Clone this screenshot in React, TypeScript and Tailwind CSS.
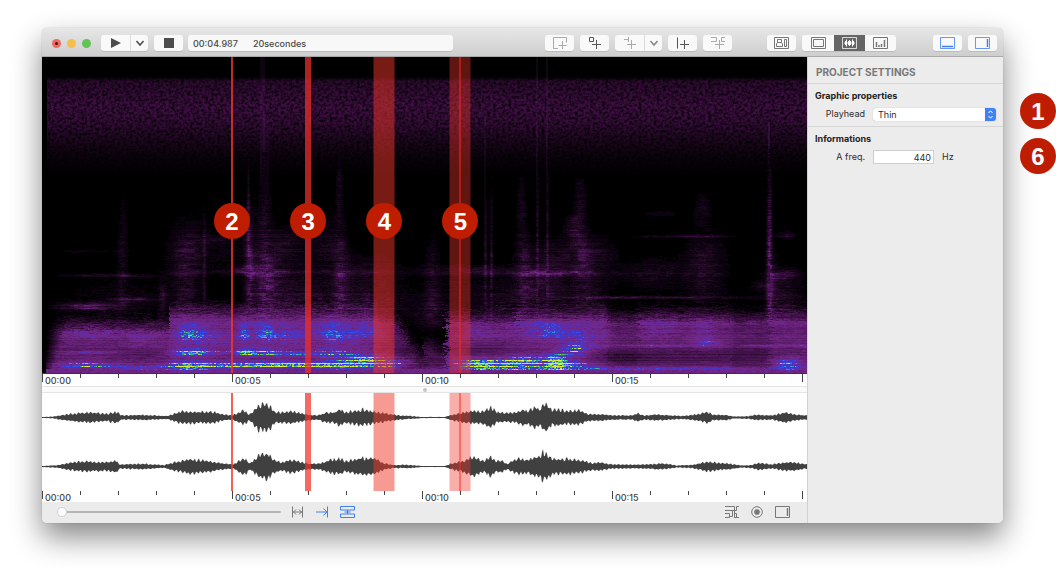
import { useMemo, useState } from "react";
import type { ReactNode } from "react";
import clsx from "clsx";

const W = 765;

/* ---------- Deterministic noise ---------- */

function createRandom(seed: number) {
  let s = seed;
  return () => {
    s = (s + 0x6d2b79f5) | 0;
    let t = Math.imul(s ^ (s >>> 15), 1 | s);
    t = (t + Math.imul(t ^ (t >>> 7), 61 | t)) ^ t;
    return ((t ^ (t >>> 14)) >>> 0) / 4294967296;
  };
}

/* ---------- Spectrogram ---------- */

const PALETTE = [
  "#0d020f", "#180619", "#240928", "#310d37", "#3f1147", "#4d1658", "#5a1b68",
  "#672178", "#6f2686", "#6a2b9a", "#5530b4", "#3f38d2", "#3150ea", "#2f8ccb",
  "#4fbf8a", "#98d944", "#dced3a",
];

// [from, to, top of band, level]
const BANDS: number[][] = [
  [0, 127, 266, 0.41], [127, 190, 251, 0.44], [190, 335, 252, 0.44], [335, 350, 256, 0.4],
  [350, 358, 262, 0.34], [358, 366, 272, 0.3], [366, 374, 286, 0.3], [374, 382, 294, 0.29],
  [382, 394, 286, 0.31], [394, 404, 290, 0.28], [404, 474, 258, 0.42], [474, 566, 253, 0.44],
  [566, 597, 258, 0.37], [597, 640, 256, 0.42], [640, 690, 255, 0.42], [690, 728, 258, 0.37], [728, 780, 255, 0.43],
];

// [x, y, radius x, radius y, amount]
const SPOTS: number[][] = [
  [48, 275, 30, 6, 0.16], [100, 281, 14, 8, 0.13], [48, 295, 28, 1.4, 0.24], [45, 308, 32, 3.5, 0.36], [100, 311, 24, 2, 0.26],
  [148, 275, 12, 8, 0.2], [165, 280, 28, 10, 0.11], [148, 295, 18, 3, 0.38], [180, 295, 30, 1.6, 0.22], [145, 309, 22, 5, 0.36],
  [202, 276, 5, 10, 0.22], [224, 275, 12, 9, 0.22], [250, 277, 14, 9, 0.14], [203, 295, 8, 3, 0.34], [226, 295, 16, 3, 0.36],
  [290, 275, 17, 10, 0.2], [325, 274, 15, 8, 0.17], [285, 296, 22, 4, 0.28], [255, 296, 12, 2, 0.24], [205, 308, 60, 3.4, 0.4],
  [255, 307, 35, 2.5, 0.3], [295, 308, 22, 4, 0.34], [322, 303, 20, 6, 0.42], [345, 307, 14, 6, 0.34], [362, 305, 12, 4, 0.18],
  [225, 285, 30, 18, 0.07], [300, 285, 30, 18, 0.07], [147, 285, 25, 18, 0.07],
  [435, 275, 20, 10, 0.1], [500, 273, 28, 9, 0.17], [508, 272, 10, 6, 0.07], [540, 280, 28, 12, 0.14],
  [430, 306, 20, 5, 0.35], [455, 307, 30, 5, 0.32], [485, 304, 25, 6, 0.36], [514, 303, 10, 7, 0.46], [534, 293, 12, 7, 0.3],
  [530, 307, 22, 3, 0.34], [575, 311, 180, 1.4, 0.33], [615, 288, 42, 1.2, 0.2], [666, 286, 13, 4, 0.2], [718, 288, 15, 1.2, 0.2],
  [660, 275, 14, 12, 0.1], [615, 270, 18, 14, 0.09], [745, 306, 14, 6, 0.34], [755, 288, 14, 1.3, 0.2],
  [650, 299, 95, 7, -0.14], [440, 291, 30, 5, -0.1], [580, 300, 30, 5, -0.1], [100, 297, 30, 5, -0.06],
];

// Faint traces above the main band: [x, y, radius x, radius y, amount]
const TRACES: number[][] = [
  [45, 249, 26, 3.5, 0.3], [92, 242, 16, 2, 0.18], [80, 245, 50, 20, 0.05], [120, 240, 4, 14, 0.14], [80, 200, 5, 55, 0.1], [55, 218, 34, 1.5, 0.11], [95, 219, 18, 1.5, 0.11], [45, 194, 30, 1.5, 0.06],
  [145, 190, 18, 26, 0.1], [143, 225, 12, 34, 0.13], [168, 182, 22, 3, 0.1], [162, 220, 1.5, 60, 0.12],
  [206, 155, 1.5, 50, 0.14], [207, 215, 4, 50, 0.21], [202, 213, 12, 4, 0.16], [222, 190, 7, 90, 0.12], [224, 226, 14, 30, 0.18],
  [200, 190, 40, 30, 0.05], [246, 230, 24, 28, 0.1], [235, 214, 90, 1.6, 0.12], [245, 185, 14, 14, 0.1], [297, 130, 4, 26, 0.11], [298, 220, 6, 40, 0.19],
  [285, 185, 16, 22, 0.1], [320, 216, 34, 16, 0.11], [330, 245, 30, 14, 0.15], [275, 245, 28, 17, 0.1],
  [390, 230, 7, 46, 0.11], [388, 270, 16, 22, 0.16], [425, 213, 40, 4, 0.14], [443, 195, 1.4, 62, 0.15], [449, 195, 1.4, 62, 0.15],
  [430, 235, 30, 24, 0.05], [461, 245, 18, 16, 0.07], [479, 150, 5, 34, 0.1], [481, 214, 7, 34, 0.13], [495, 177, 1.4, 75, 0.14], [505, 177, 1.4, 75, 0.14],
  [512, 215, 42, 2.6, 0.2], [499, 230, 24, 20, 0.16], [515, 200, 28, 18, 0.11], [538, 140, 6, 24, 0.11], [533, 172, 9, 14, 0.18],
  [541, 205, 8, 22, 0.15], [557, 200, 16, 20, 0.1], [545, 240, 16, 16, 0.13], [570, 240, 60, 1.2, 0.16], [640, 240, 110, 1.2, 0.13],
  [618, 179, 24, 1.5, 0.11], [660, 179, 24, 1.5, 0.12], [618, 156, 18, 3, 0.08], [612, 216, 28, 14, 0.1], [660, 150, 8, 16, 0.1],
  [662, 210, 18, 30, 0.14], [727, 200, 2.5, 75, 0.3], [730, 235, 5, 34, 0.1], [722, 228, 12, 5, 0.1], [740, 218, 14, 5, 0.15], [744, 178, 9, 4, 0.13],
  [742, 240, 16, 30, 0.11],
];

function addSpots(list: number[][], x: number, y: number) {
  let sum = 0;
  for (const [cx, cy, rx, ry, a] of list) {
    const dx = (x - cx) / rx;
    const dy = (y - cy) / ry;
    const d = dx * dx + dy * dy;
    if (d < 5) sum += a * Math.exp(-d * 0.9);
  }
  return sum;
}

function buildSpectrogram() {
  const random = createRandom(17);
  const paths: string[][] = PALETTE.map(() => []);
  const clumps = Array.from({ length: 60 * 170 }, () => random());
  for (let y = 90; y < 316; y++) {
    const row = random();
    let runStart = 4;
    let runLevel = -1;
    const flush = (x: number) => {
      if (runLevel >= 0) paths[runLevel].push(`M${runStart} ${y}.5H${x}`);
    };
    let streak = 0;
    let grain = 0;
    for (let x = 4; x < W; x++) {
      if (x % 2 === 0 || random() > 0.7) {
        streak = random();
        grain = grain * 0.55 + streak * 0.45;
      }
      const clump = clumps[Math.floor(y / 4) * 100 + Math.floor(x / 8)];
      const spread = x > 115 && x < 140 ? 2 : 14;
      const at = x + (grain - 0.5) * spread;
      const band = BANDS.find((b) => at >= b[0] && at < b[1]) ?? BANDS[0];
      const ramp = Math.max(0, Math.min(1, (y - band[2] + 6 + grain * 8) / 20));
      const attack = Math.min(1, (x - 2 + (y - 290) * 0.25) / 16);
      let v = ramp * (band[3] + (row - 0.5) * 0.07 + (clump - 0.5) * 0.03) * Math.max(0.15, attack);
      if (ramp > 0) {
        v += addSpots(SPOTS, x, y) * (y > 285 ? (y % 3 === 0 ? 1.3 : 0.72) : 0.9 + row * 0.35) * (0.6 + streak * 0.6);
        v += (grain - 0.5) * 0.12;
        if (y > 311) v = Math.max(v, 0.44 + streak * 0.1);
      }
      if (y < 276) {
        const fade = y > 255 ? (276 - y) / 21 : 1;
        const trace = Math.min(0.32, addSpots(TRACES, x, y));
        v += trace * fade * (0.3 + grain * 0.9 + clump * 0.5) * (0.75 + row * 0.5) * (1 - ramp * 0.7);
        if (ramp < 0.1) v += 0.05 * grain * Math.max(0, (y - 130) / 120);
      }
      const level = Math.min(PALETTE.length - 1, Math.floor(v * 19) - 1);
      if (level !== runLevel) {
        flush(x);
        runStart = x;
        runLevel = level;
      }
    }
    flush(W);
  }
  return paths.map((p) => p.join(""));
}

function Spectrogram() {
  const paths = useMemo(buildSpectrogram, []);
  return (
    <svg
      className="block h-full w-full bg-black"
      viewBox="0 0 765 316"
      preserveAspectRatio="none"
      role="img"
      aria-label="Spectrogram"
    >
      <defs>
        <linearGradient id="band-fade" x1="0" y1="0" x2="0" y2="1">
          <stop offset="0" stopColor="#fff" stopOpacity="0" />
          <stop offset="0.04" stopColor="#fff" stopOpacity="0.6" />
          <stop offset="0.3" stopColor="#fff" stopOpacity="0.84" />
          <stop offset="0.45" stopColor="#fff" stopOpacity="0.72" />
          <stop offset="0.62" stopColor="#fff" stopOpacity="0.42" />
          <stop offset="0.8" stopColor="#fff" stopOpacity="0.16" />
          <stop offset="1" stopColor="#fff" stopOpacity="0" />
        </linearGradient>
        <mask id="band-mask">
          <rect x="5" y="20" width="760" height="100" fill="url(#band-fade)" />
        </mask>
        <filter id="grain" x="0" y="0" width="1" height="1" colorInterpolationFilters="sRGB">
          <feTurbulence type="fractalNoise" baseFrequency="0.33 0.38" numOctaves="3" seed="4" />
          <feColorMatrix values="0 0 0 0 0.3  0 0 0 0 0.07  0 0 0 0 0.32  1.8 0 0 0 -0.2" />
        </filter>
      </defs>
      <g mask="url(#band-mask)">
        <rect x="0" y="18" width="765" height="104" filter="url(#grain)" />
      </g>
      <g fill="#7a2a8c">
        <rect x="218" y="0" width="5" height="130" opacity="0.12" />
        <rect x="221" y="60" width="6" height="80" opacity="0.1" />
        <rect x="494" y="0" width="2" height="130" opacity="0.14" />
        <rect x="504" y="0" width="2" height="130" opacity="0.14" />
        <rect x="442" y="60" width="2" height="90" opacity="0.1" />
        <rect x="726" y="65" width="2" height="80" opacity="0.25" />
      </g>
      <g fill="none" strokeWidth="1">
        {paths.map((d, i) => (
          <path key={PALETTE[i]} d={d} stroke={PALETTE[i]} />
        ))}
      </g>
    </svg>
  );
}

/* ---------- Waveforms ---------- */

const LEFT_ENVELOPE: number[][] = [
  [0, 0.5], [10, 0.8], [25, 3], [35, 4], [47, 5], [65, 3.5], [74, 5.5], [80, 2], [100, 2.5], [125, 1.5], [132, 3.5],
  [140, 6], [155, 5.5], [172, 5.5], [180, 3], [190, 2], [195, 4], [202, 7], [207, 3], [212, 7], [217, 12], [222, 13.5],
  [228, 11], [233, 5], [250, 5.5], [258, 4.5], [265, 3], [275, 2], [285, 5], [292, 5], [298, 8], [304, 5], [320, 8],
  [330, 6], [340, 4.5], [350, 3], [357, 2], [366, 1.6], [380, 0.6], [403, 0.5], [407, 2], [415, 3.5], [425, 6],
  [440, 6], [449, 10], [455, 5], [465, 4.5], [475, 5], [481, 8], [485, 6], [490, 9], [494, 10], [497, 7], [502, 13],
  [506, 12], [510, 7], [517, 8], [526, 6], [537, 7], [545, 3.5], [560, 3], [575, 2], [590, 2], [596, 4], [602, 2],
  [615, 2.8], [640, 1.5], [656, 3], [666, 5.5], [671, 2.5], [684, 2.5], [692, 1], [705, 1.2], [715, 2.5], [730, 2], [743, 5], [755, 2.6], [765, 2],
];

const RIGHT_ENVELOPE: number[][] = [
  [0, 0.5], [15, 1.2], [28, 3.5], [45, 5], [60, 4], [70, 4.5], [75, 6], [77, 2], [100, 2.6], [122, 1.3], [132, 4],
  [148, 7], [165, 5.5], [180, 3], [192, 2], [202, 8.5], [208, 3], [214, 8], [219, 12], [226, 12], [232, 6], [240, 4],
  [248, 6.5], [258, 4.5], [268, 2.5], [278, 3], [285, 5.5], [298, 7.5], [304, 5], [320, 8.5], [333, 7.5], [342, 3],
  [352, 1.5], [366, 1.6], [380, 0.6], [403, 0.5], [408, 2.5], [420, 5], [431, 9.5], [442, 5], [449, 10], [453, 5.5], [460, 5.5],
  [465, 2.5], [475, 7.5], [485, 6.5], [493, 9], [498, 10], [501, 14.5], [506, 11], [512, 7], [525, 7.5], [540, 5.5],
  [550, 3.5], [558, 4], [570, 2], [590, 1.8], [605, 2], [620, 3], [635, 1], [650, 1.5], [665, 4.5], [685, 3],
  [700, 1], [710, 1.5], [716, 3.5], [730, 2], [742, 4], [752, 4], [765, 2],
];

function waveformPath(envelope: number[][], center: number, seed: number) {
  const random = createRandom(seed);
  const upper: string[] = [];
  const lower: string[] = [];
  for (let x = 0; x <= W; x++) {
    const next = Math.max(1, envelope.findIndex((p) => p[0] >= x));
    const [x0, a0] = envelope[next - 1];
    const [x1, a1] = envelope[next];
    const amp = a0 + ((a1 - a0) * (x - x0)) / (x1 - x0);
    const pulse = x % 4 < 2 ? 1.12 : 0.84;
    upper.push(`${x} ${(center - Math.max(0.6, amp * pulse * (0.85 + random() * 0.3))).toFixed(1)}`);
    lower.unshift(`${x} ${(center + Math.max(0.6, amp * pulse * (0.85 + random() * 0.3))).toFixed(1)}`);
  }
  return `M${upper.join("L")}L${lower.join("L")}Z`;
}

const LEFT_WAVE = waveformPath(LEFT_ENVELOPE, 24.5, 5);
const RIGHT_WAVE = waveformPath(RIGHT_ENVELOPE, 73.5, 9);

function Waveforms() {
  return (
    <svg className="block h-full w-full" viewBox="0 0 765 98" preserveAspectRatio="none" role="img" aria-label="Waveform">
      <path d={LEFT_WAVE} fill="#404040" />
      <path d={RIGHT_WAVE} fill="#404040" />
    </svg>
  );
}

/* ---------- Playheads and ruler ---------- */

const PLAYHEADS = [
  { id: 2, left: "left-[24.84%]", bar: "w-[2px] bg-[#f0382b]/80", core: false },
  { id: 3, left: "left-[34.8%]", bar: "w-[6px] bg-[#f0302a]/72", core: false },
  { id: 4, left: "left-[44.75%]", bar: "w-[21px] bg-[#f0352a]/50", core: false },
  { id: 5, left: "left-[54.7%]", bar: "w-[21px] bg-[#f0352a]/40", core: true },
];

function Badge({ children }: { children: ReactNode }) {
  return (
    <span className="flex size-9 shrink-0 items-center justify-center rounded-full bg-[#bf1d02] pt-px font-['Liberation_Sans',sans-serif] text-2xl leading-none font-bold text-white">
      {children}
    </span>
  );
}

function Playheads({ labelled = false }: { labelled?: boolean }) {
  return (
    <>
      {PLAYHEADS.map((p) => (
        <div key={p.id} className={clsx("absolute inset-y-0 flex w-0 items-center justify-center", p.left)}>
          <div className={clsx("absolute inset-y-0 left-0 flex -translate-x-1/2 justify-center", p.bar)}>
            {p.core && <div className="h-full w-px bg-[#ff2a1c]" />}
          </div>
          {labelled && (
            <div className="relative pt-3">
              <Badge>{p.id}</Badge>
            </div>
          )}
        </div>
      ))}
    </>
  );
}

function Ruler({ className }: { className: string }) {
  return (
    <div className={clsx("grid grid-cols-[190fr_190fr_190fr_190fr_5fr] overflow-hidden", className)}>
      {["00:00", "00:05", "00:10", "00:15", ""].map((label, i) => (
        <div key={i} className="relative min-w-0 pt-[2px] pl-[3px] text-[9px] leading-[10px] font-medium text-[#444]">
          <div className="absolute inset-0 grid grid-cols-5">
            <i className="h-2 border-l border-[#444]" />
            {label && [1, 2, 3, 4].map((n) => <i key={n} className="h-1 border-l border-[#444]" />)}
          </div>
          {label}
        </div>
      ))}
    </div>
  );
}

/* ---------- Toolbar ---------- */

function Icon({ children, className, w = 16 }: { children: ReactNode; className?: string; w?: number }) {
  return (
    <svg
      className={clsx("h-[14px] shrink-0", className)}
      width={w}
      height="14"
      viewBox={`0 0 ${w} 14`}
      fill="none"
      stroke="currentColor"
      strokeWidth="1"
      aria-hidden="true"
    >
      {children}
    </svg>
  );
}

function ToolButton({ label, className, children }: { label: string; className?: string; children: ReactNode }) {
  return (
    <button
      type="button"
      aria-label={label}
      className={clsx("flex h-4 shrink-0 items-center justify-center", className ?? "w-[29px] rounded-[3px] bg-[#f9f9f9] text-[#636363] shadow-[0_1px_0_#bcbcbc]")}
    >
      {children}
    </button>
  );
}

const GROUP = "flex shrink-0 overflow-hidden rounded-[3px] bg-[#f9f9f9] shadow-[0_1px_0_#bcbcbc]";

function Toolbar() {
  return (
    <header className="flex h-[29px] items-center rounded-t-[5px] border-b border-[#a9a9a9] bg-linear-to-b from-[#e7e7e7] to-[#cecece] pt-[2px] pr-[6px] pl-[10px]">
      <div className="flex w-[49px] shrink-0 gap-[6px]">
        <button type="button" aria-label="Close" className="flex size-[9px] items-center justify-center rounded-full bg-[#ee6a5f]">
          <span className="size-[3px] rounded-full bg-[#5c0a06]" />
        </button>
        <button type="button" aria-label="Minimize" className="size-[9px] rounded-full bg-[#f5be4f]" />
        <button type="button" aria-label="Zoom" className="size-[9px] rounded-full bg-[#61c454]" />
      </div>
      <div className="flex shrink-0 gap-[6px]">
        <div className={GROUP}>
          <ToolButton label="Play" className="w-[30px] border-r border-[#dcdcdc] text-[#4c4c4c]">
            <Icon w={12}>
              <path d="M1 2v10l10-5z" fill="currentColor" stroke="none" />
            </Icon>
          </ToolButton>
          <ToolButton label="Playback options" className="w-[17px] text-[#4c4c4c]">
            <Icon w={10}>
              <path d="M1.5 5l3.5 4 3.5-4" strokeWidth="1.5" />
            </Icon>
          </ToolButton>
        </div>
        <ToolButton label="Stop">
          <span className="size-[10px] bg-[#4c4c4c]" />
        </ToolButton>
      </div>
      <div className="ml-[5px] flex h-4 min-w-0 flex-[263] items-center gap-[15px] overflow-hidden rounded-[3px] bg-[#f8f8f8] px-[5px] pt-px text-[9px] font-medium whitespace-nowrap text-[#484848] shadow-[0_1px_0_#bcbcbc]">
        <span>00:04.987</span>
        <span>20secondes</span>
      </div>
      <div className="min-w-2 flex-[95]" />
      <div className="flex shrink-0 gap-[6px]">
        <ToolButton label="Add region">
          <Icon className="text-[#aaa]">
            <path d="M6 12.5H1.5v-11h13v5M10.5 5v8M6.5 9.5h8" />
          </Icon>
        </ToolButton>
        <ToolButton label="Add object">
          <Icon className="text-[#555]">
            <path d="M2.5 1.5h4v4h-4zM9.5 4v9M5 8.5h9" />
          </Icon>
        </ToolButton>
        <div className={GROUP}>
          <ToolButton label="Add point" className="w-[30px] border-r border-[#dcdcdc] text-[#aaa]">
            <Icon>
              <path d="M2 3.5h4M6.5 1v5M9.5 4v9M5 8.5h9" />
            </Icon>
          </ToolButton>
          <ToolButton label="Point options" className="w-[17px] text-[#888]">
            <Icon w={10}>
              <path d="M1.5 5l3.5 4 3.5-4" strokeWidth="1.5" />
            </Icon>
          </ToolButton>
        </div>
        <ToolButton label="Add marker">
          <Icon className="text-[#555]">
            <path d="M2.5 1.5v11M9.5 4v9M5 8.5h9" />
          </Icon>
        </ToolButton>
        <ToolButton label="Add link">
          <Icon className="text-[#aaa]">
            <path d="M1 1.5h5.5v4H1M15 1.500h-3.5v4H15M9.5 4v9M5 8.500h9" />
          </Icon>
        </ToolButton>
      </div>
      <div className="min-w-2 flex-[36]" />
      <ToolButton label="Layout">
        <Icon w={15} className="text-[#777]">
          <path d="M.5 1.5h14v11H.5zM3.5 3.500h4v3h-4zM7.500 6.500l1 1.500v2.500h-6V8l1-1.500M10.500 3.500h2v7h-2z" />
        </Icon>
      </ToolButton>
      <div className={clsx(GROUP, "ml-[6px]")}>
        <ToolButton label="Frame view" className="w-8 text-[#777]">
          <Icon w={15}>
            <path d="M.5 1.5h14v11H.5zM2.5 3.500h10v7h-10z" />
          </Icon>
        </ToolButton>
        <ToolButton label="Waveform view" className="w-[31px] bg-[#666] text-white">
          <Icon w={15}>
            <path d="M.5 1.5h14v11H.5z" strokeOpacity="0.75" />
            <path d="M2 7h11M3.5 5v4M4.500 3.500v7M6.500 5v4M7.500 4v6M8.500 5v4M10.500 3.500v7M11.500 5v4" />
          </Icon>
        </ToolButton>
        <ToolButton label="Chart view" className="w-[31px] text-[#777]">
          <Icon w={15}>
            <path d="M.5 1.5h14v11H.5z" />
            <path d="M3.500 6v5M6 9v2M8.500 8v3M11.500 4v7" strokeWidth="1.5" />
          </Icon>
        </ToolButton>
      </div>
      <div className="min-w-2 flex-[38]" />
      <div className="flex shrink-0 gap-[6px]">
        <ToolButton label="Toggle bottom panel">
          <Icon w={15} className="text-[#3f80f5]">
            <path d="M.5 1.5h14v11H.5z" strokeOpacity="0.8" />
            <path d="M2 10.5h11" strokeWidth="1.5" />
          </Icon>
        </ToolButton>
        <ToolButton label="Toggle side panel">
          <Icon w={15} className="text-[#3f80f5]">
            <path d="M.5 1.5h14v11H.5z" strokeOpacity="0.8" />
            <path d="M12.5 3v8" strokeWidth="1.5" />
          </Icon>
        </ToolButton>
      </div>
    </header>
  );
}

/* ---------- Footer ---------- */

function Footer() {
  const [zoom, setZoom] = useState(0);
  const item = "flex h-[14px] items-center";
  return (
    <footer className="flex h-[21px] items-center rounded-bl-[5px] bg-[#ebebeb] pr-[17px] pb-px pl-[15px] text-[#787878]">
      <input
        type="range"
        aria-label="Zoom"
        value={zoom}
        onChange={(e) => setZoom(Number(e.target.value))}
        className="h-[10px] w-[224px] appearance-none bg-transparent [&::-webkit-slider-runnable-track]:h-[2px] [&::-webkit-slider-runnable-track]:rounded-full [&::-webkit-slider-runnable-track]:bg-[#b5b5b5] [&::-webkit-slider-thumb]:-mt-[4px] [&::-webkit-slider-thumb]:size-[10px] [&::-webkit-slider-thumb]:appearance-none [&::-webkit-slider-thumb]:rounded-full [&::-webkit-slider-thumb]:border [&::-webkit-slider-thumb]:border-[#d0d0d0] [&::-webkit-slider-thumb]:bg-white"
      />
      <div className="ml-[10px] flex gap-3">
        <button type="button" aria-label="Fit width" className={item}>
          <Icon w={13}>
            <path d="M1.5 1.5v11M11.5 1.5v11M2 7h9M5 4.5L2.5 7 5 9.5M8 4.5L10.5 7 8 9.5" />
          </Icon>
        </button>
        <button type="button" aria-label="Follow playhead" className={clsx(item, "text-[#3f80f5]")}>
          <Icon w={12}>
            <path d="M0 7h11M11.5 1.5v11M7.5 3.5L11 7l-3.5 3.5" />
          </Icon>
        </button>
        <button type="button" aria-label="Link tracks" className={clsx(item, "text-[#3f80f5]")}>
          <Icon w={15}>
            <path d="M.5 1.5h14v3.5H.5zM.5 9h14v3.5H.5z" />
            <path d="M4.500 7h6M7.500 5v4" strokeWidth="1.2" />
          </Icon>
        </button>
      </div>
      <div className="ml-auto flex items-center gap-3">
        <button type="button" aria-label="Snap" className={item}>
          <Icon w={14}>
            <path d="M0 1.5h9.500V12M14 1.5h-2.500v4H0M14 12.5H9M0 8.5h4.500v4H0M7.500 6v5.500H5M9.500 8.5h2v4" />
          </Icon>
        </button>
        <button type="button" aria-label="Record" className={item}>
          <Icon w={12}>
            <circle cx="6" cy="7" r="5.3" />
            <circle cx="6" cy="7" r="2.8" fill="currentColor" stroke="none" />
          </Icon>
        </button>
        <button type="button" aria-label="Side view" className={item}>
          <Icon w={15}>
            <path d="M.5 1.5h14v11H.5z" />
            <path d="M12.5 3v8" strokeWidth="1.5" />
          </Icon>
        </button>
      </div>
    </footer>
  );
}

/* ---------- Settings panel ---------- */

function Settings() {
  const [playhead, setPlayhead] = useState("Thin");
  const [frequency, setFrequency] = useState("440");
  const row = "mt-[5px] flex h-[14px] items-center gap-2";
  return (
    <aside className="flex w-[196px] shrink-0 flex-col rounded-br-[5px] border-l border-[#d2d2d2] bg-[#ececec] text-[9px] leading-3 text-[#2e2e2e]">
      <h1 className="flex h-[27px] items-center border-b border-[#d6d6d6] pt-[3px] pl-2 text-[10px] font-bold text-[#777]">
        PROJECT SETTINGS
      </h1>
      <section className="h-[43px] border-b border-[#d6d6d6] px-[7px] pt-[6px]">
        <h2 className="font-bold text-[#222]">Graphic properties</h2>
        <div className={row}>
          <label htmlFor="playhead" className="w-[50px] shrink-0 text-right">
            Playhead
          </label>
          <div className="relative h-[13px] flex-1 overflow-hidden rounded-[3px] bg-white shadow-[0_0_1px_#999]">
            <select
              id="playhead"
              value={playhead}
              onChange={(e) => setPlayhead(e.target.value)}
              className="block h-full w-full appearance-none bg-transparent pl-[5px] text-[9px] leading-[13px]"
            >
              <option>Thin</option>
              <option>Medium</option>
              <option>Thick</option>
            </select>
            <svg className="pointer-events-none absolute inset-y-0 right-0 bg-[#3f82f7]" width="11" height="13" viewBox="0 0 11 13" fill="none" stroke="#fff" aria-hidden="true">
              <path d="M3.5 5l2-2.2 2 2.2M3.5 8l2 2.2 2-2.2" />
            </svg>
          </div>
        </div>
      </section>
      <section className="px-[7px] pt-[6px]">
        <h2 className="font-bold text-[#222]">Informations</h2>
        <div className={row}>
          <label htmlFor="frequency" className="w-[50px] shrink-0 text-right">
            A freq.
          </label>
          <input
            id="frequency"
            value={frequency}
            onChange={(e) => setFrequency(e.target.value)}
            className="h-[14px] w-[61px] border border-[#cfcfcf] bg-white pr-[2px] text-right text-[9px]"
          />
          <span>Hz</span>
        </div>
      </section>
    </aside>
  );
}

export default function App() {
  return (
    <div className="flex min-h-screen items-start overflow-hidden bg-white pt-7 pb-14 pl-[42px] font-['Inter',sans-serif]">
      <main className="min-w-0 flex-1 rounded-[5px] shadow-[0_14px_30px_rgba(0,0,0,0.48),0_0_1px_rgba(0,0,0,0.4)]">
        <Toolbar />
        <div className="flex">
          <div className="min-w-0 flex-1 rounded-bl-[5px] bg-white">
            <div className="relative h-[317px] border-b border-[#5a1b68]">
              <Spectrogram />
              <Playheads labelled />
            </div>
            <Ruler className="h-3" />
            <div className="flex h-[7px] items-center justify-center border-y border-[#e4e4e4] bg-[#fafafa]">
              <span className="size-1 rounded-full bg-[#c4c4c4]" />
            </div>
            <div className="relative h-[98px]">
              <Waveforms />
              <Playheads />
            </div>
            <Ruler className="h-[11px]" />
            <Footer />
          </div>
          <Settings />
        </div>
      </main>
      <div className="flex w-[53px] shrink-0 flex-col items-end gap-[9px] pt-[65px]">
        <Badge>1</Badge>
        <Badge>6</Badge>
      </div>
    </div>
  );
}
